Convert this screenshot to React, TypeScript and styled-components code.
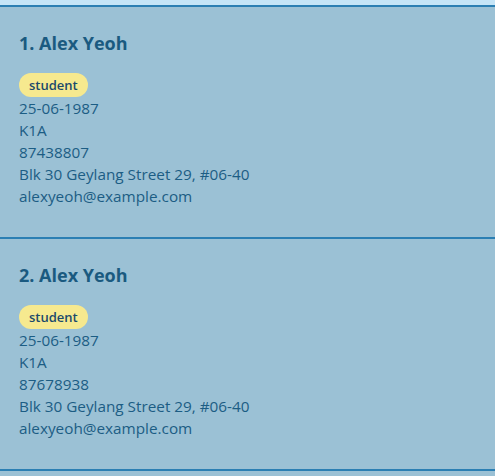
import React from "react";
import styled, { createGlobalStyle } from "styled-components";

const Global = createGlobalStyle`
  html, body { margin: 0; padding: 0; background: #9bc1d5; overflow: hidden; }
  body { font-family: "Open Sans", "Noto Sans", sans-serif; }
`;

const List = styled.div`
  display: flex;
  flex-direction: column;
  padding-top: 5px;
  background: #c5e5f7;
`;

const Card = styled.div`
  background: #9bc1d5;
  border-top: 2px solid #2b7fb3;
  height: 232px;
  flex-shrink: 0;
  padding: 24px 0 0 19px;
  box-sizing: border-box;
  display: flex;
  flex-direction: column;
  align-items: flex-start;
  color: #1c5d84;
`;

const Title = styled.div`
  font-weight: 700;
  font-size: 18px;
  line-height: 24px;
  color: #1a5a80;
`;

const Tag = styled.span`
  margin-top: 18px;
  height: 24px;
  padding: 0 10px;
  border-radius: 12px;
  background: #f6e98f;
  color: #1b4a6b;
  font-size: 13px;
  font-weight: 600;
  line-height: 24px;
`;

const Line = styled.div`
  font-size: 15.3px;
  line-height: 22px;
`;

const people = [
  { n: 1, phone: "87438807" },
  { n: 2, phone: "87678938" },
];

export default function App() {
  return (
    <>
      <Global />
      <List>
        {people.map((p) => (
          <Card key={p.n}>
            <Title>{p.n}. Alex Yeoh</Title>
            <Tag>student</Tag>
            <Line>25-06-1987</Line>
            <Line>K1A</Line>
            <Line>{p.phone}</Line>
            <Line>Blk 30 Geylang Street 29, #06-40</Line>
            <Line>alexyeoh@example.com</Line>
          </Card>
        ))}
        <Card />
      </List>
    </>
  );
}
